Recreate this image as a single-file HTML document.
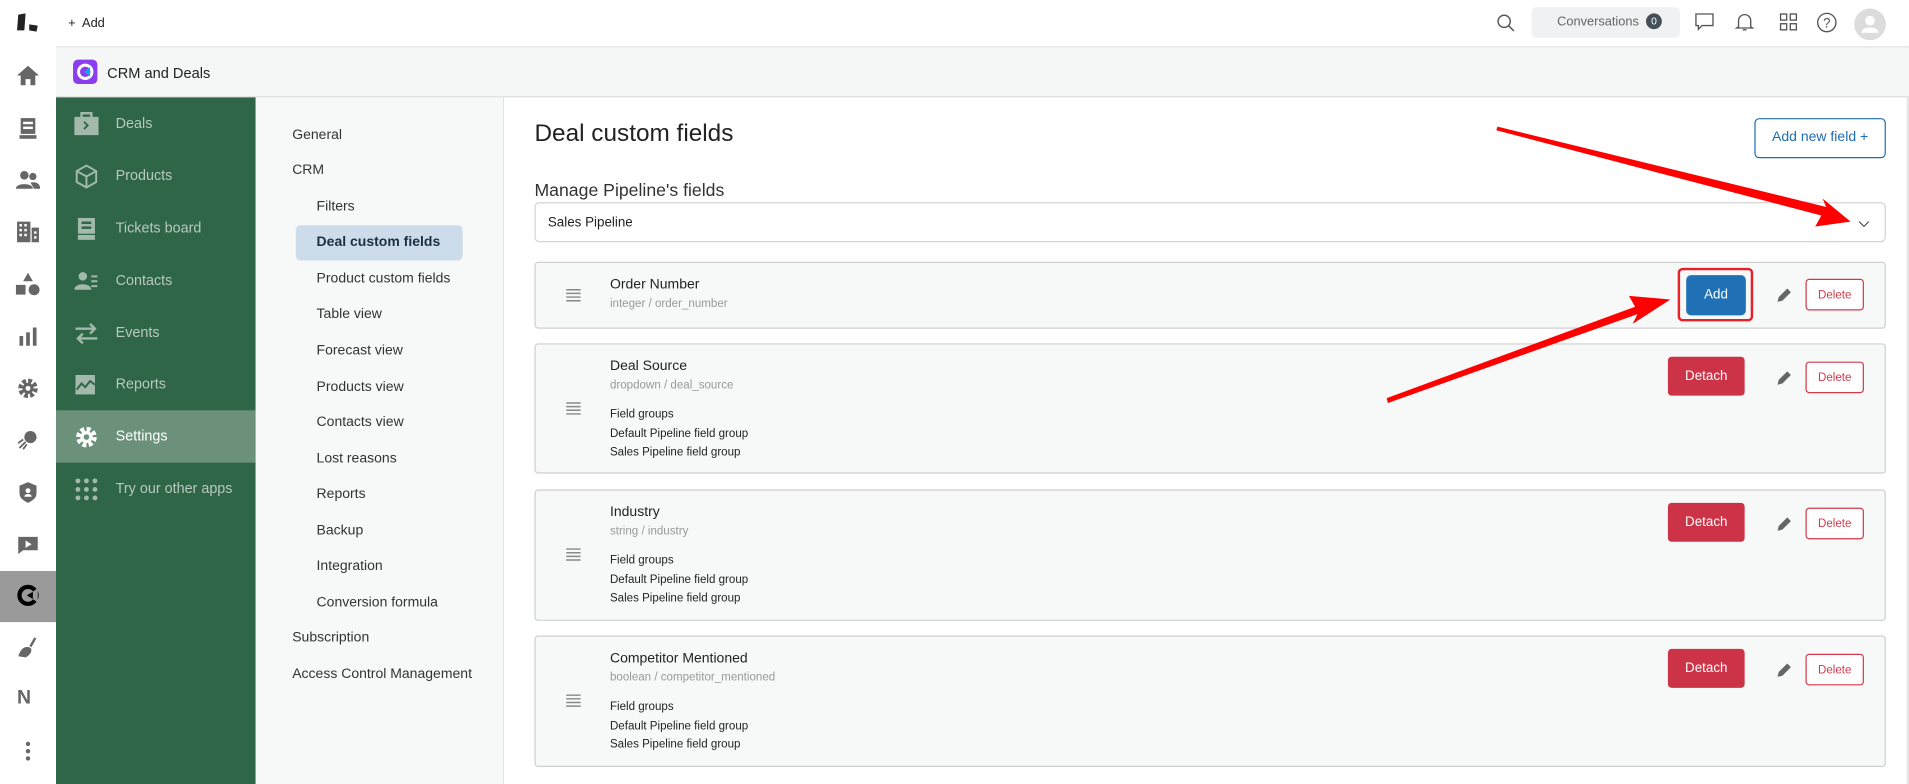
<!DOCTYPE html>
<html><head><meta charset="utf-8"><style>
*{box-sizing:border-box;margin:0;padding:0}
body{width:1909px;height:784px;overflow:hidden;background:#fff;font-family:"Liberation Sans",sans-serif}
#w{position:absolute;left:0;top:0;width:1568px;height:644px;transform:scale(1.21747);transform-origin:0 0}
.a{position:absolute}
.rail{left:0;top:0;width:46px;height:644px;background:#fff}
.ri{position:absolute;left:13px;width:20px;height:20px;color:#666}
.top{left:46px;top:0;width:1522px;height:39px;background:#fff;border-bottom:1px solid #e3e3e3}
.hdr{left:46px;top:39px;width:1522px;height:41px;background:#f5f6f6;border-bottom:1px solid #ddd}
.side{left:46px;top:80px;width:164px;height:564px;background:#2e6647}
.si{position:absolute;left:0;width:164px;height:43px;color:#b8c8be;font-size:11.8px;line-height:43px;padding-left:49px}
.si svg{position:absolute;left:15px;top:12px}
.sub{left:210px;top:80px;width:204px;height:564px;background:#f7f8f8;border-right:1px solid #e3e3e3}
.sb{position:absolute;font-size:11.5px;color:#333}
.main{left:414px;top:80px;width:1154px;height:564px;background:#fff;border-right:2px solid #e6e6e6}
.card{position:absolute;left:439px;width:1110px;background:#f7f8f8;border:1px solid #cfcfcf;border-radius:3px}
.nm{position:absolute;left:61px;font-size:11.5px;color:#222}
.ty{position:absolute;left:61px;font-size:9.5px;color:#999}
.fg{position:absolute;left:61px;font-size:9.5px;color:#222;line-height:15.5px}
.hb{position:absolute;left:25px}
.det{position:absolute;left:930px;width:63px;height:32px;background:#cd3346;color:#fff;border-radius:3px;font-size:11px;text-align:center;line-height:32px}
.del{position:absolute;left:1043px;width:48px;height:26px;border:1px solid #d23a4b;color:#d23a4b;border-radius:3px;font-size:9.5px;text-align:center;line-height:26px;background:#fff}
.pen{position:absolute;left:1019px}
</style></head><body><div id="w">
<div class="a rail">
 <svg class="ri" style="top:9px" viewBox="0 0 20 20"><path d="M2 3l6-1 -1 14-6 0z" fill="#222"/><path d="M11 11l7 1-1 5-6-1z" fill="#222"/></svg>
 <svg class="ri" style="top:52px" viewBox="0 0 20 20"><path d="M10 2L1 10h3v8h4v-5h4v5h4v-8h3z" fill="#666"/></svg>
 <svg class="ri" style="top:95px" viewBox="0 0 20 20"><rect x="4" y="2" width="12" height="13" fill="#666"/><rect x="3" y="16" width="14" height="3" fill="#666"/><rect x="6" y="5" width="8" height="2" fill="#fff"/><rect x="6" y="9" width="8" height="2" fill="#fff"/></svg>
 <svg class="ri" style="top:138px" viewBox="0 0 20 20"><circle cx="7" cy="6" r="3.5" fill="#666"/><circle cx="14" cy="7" r="3" fill="#666"/><path d="M0 17c0-5 14-5 14 0z M12 12c5-1 8 1 8 5h-5z" fill="#666"/></svg>
 <svg class="ri" style="top:180px" viewBox="0 0 20 20"><path d="M1 2h11v17H1z M13 7h6v12h-6z" fill="#666"/><path d="M3 4h2v2H3zM7 4h2v2H7zM3 8h2v2H3zM7 8h2v2H7zM3 12h2v2H3zM7 12h2v2H7zM15 10h2v2h-2zM15 14h2v2h-2z" fill="#fff"/></svg>
 <svg class="ri" style="top:223px" viewBox="0 0 20 20"><path d="M10 1l4 7H6z" fill="#666"/><rect x="0" y="11" width="8" height="8" fill="#666"/><circle cx="15" cy="15" r="4.5" fill="#666"/></svg>
 <svg class="ri" style="top:266px" viewBox="0 0 20 20"><rect x="3" y="10" width="3" height="8" fill="#666"/><rect x="8.5" y="7" width="3" height="11" fill="#666"/><rect x="14" y="3" width="3" height="15" fill="#666"/></svg>
 <svg class="ri" style="top:309px" viewBox="0 0 20 20"><circle cx="10" cy="10" r="6" fill="none" stroke="#666" stroke-width="4" stroke-dasharray="3 1.7"/><circle cx="10" cy="10" r="4.5" fill="#666"/><circle cx="10" cy="10" r="2" fill="#fff"/></svg>
 <svg class="ri" style="top:351px" viewBox="0 0 20 20"><circle cx="12" cy="8" r="5" fill="#666"/><path d="M3 17l5-5M2 13l4-3M6 18l3-4" stroke="#666" stroke-width="1.5"/></svg>
 <svg class="ri" style="top:394px" viewBox="0 0 20 20"><path d="M10 2l7 3v6c0 4-3 6-7 8-4-2-7-4-7-8V5z" fill="#666"/><circle cx="10" cy="9" r="2" fill="#fff"/><path d="M7 14c0-3 6-3 6 0z" fill="#fff"/></svg>
 <svg class="ri" style="top:437px" viewBox="0 0 20 20"><path d="M2 4h16v11H6l-4 3z" fill="#666"/><path d="M8 7l5 3-5 3z" fill="#fff"/></svg>
 <div class="a" style="left:0;top:469px;width:46px;height:42px;background:#9a9a9a"></div>
 <svg class="ri" style="top:479px" viewBox="0 0 20 20"><circle cx="10" cy="10" r="7" fill="none" stroke="#000" stroke-width="3.5"/><path d="M10 10l8-6v12z" fill="#9a9a9a"/><path d="M9 10l5-3v6z" fill="#000"/></svg>
 <svg class="ri" style="top:522px" viewBox="0 0 20 20"><path d="M16 2l-4 7" stroke="#666" stroke-width="2"/><path d="M2 17c2-6 5-9 10-7 2 2 0 6-4 8z" fill="#666"/></svg>
 <div class="a" style="left:14px;top:565px;font-weight:bold;font-size:16px;color:#666">N</div>
 <svg class="ri" style="top:607px" viewBox="0 0 20 20"><circle cx="10" cy="4" r="1.8" fill="#666"/><circle cx="10" cy="10" r="1.8" fill="#666"/><circle cx="10" cy="16" r="1.8" fill="#666"/></svg>
</div>
<div class="a top">
 <div class="a" style="left:10px;top:13px;font-size:10.5px;color:#222">+&nbsp; Add</div>
 <svg class="a" style="left:1183px;top:11px" width="16" height="16" viewBox="0 0 16 16"><circle cx="6.5" cy="6.5" r="5" fill="none" stroke="#555" stroke-width="1.2"/><path d="M10 10l4.5 4.5" stroke="#555" stroke-width="1.2"/></svg>
 <div class="a" style="left:1212px;top:6px;width:122px;height:25px;background:#f0f1f2;border-radius:4px;font-size:10.5px;color:#666;line-height:25px;padding-left:21px">Conversations <span style="display:inline-block;width:13px;height:13px;border-radius:50%;background:#454f58;color:#fff;font-size:8.5px;text-align:center;line-height:13px;margin-left:3px;vertical-align:1px">0</span></div>
 <svg class="a" style="left:1346px;top:10px" width="16" height="16" viewBox="0 0 16 16"><path d="M1 1.5h14v9.5H6l-3 3v-3H1z" fill="none" stroke="#555" stroke-width="1.1"/></svg>
 <svg class="a" style="left:1379px;top:10px" width="16" height="16" viewBox="0 0 16 16"><path d="M3 12V7a5 5 0 0110 0v5l1.5 1h-13z M6.5 14.5h3" fill="none" stroke="#555" stroke-width="1.1"/></svg>
 <svg class="a" style="left:1415px;top:10px" width="16" height="16" viewBox="0 0 16 16"><g fill="none" stroke="#555" stroke-width="1.1"><rect x="1.5" y="1.5" width="5" height="5"/><rect x="9.5" y="1.5" width="5" height="5"/><rect x="1.5" y="9.5" width="5" height="5"/><rect x="9.5" y="9.5" width="5" height="5"/></g></svg>
 <svg class="a" style="left:1446px;top:10px" width="17" height="17" viewBox="0 0 17 17"><circle cx="8.5" cy="8.5" r="7.5" fill="none" stroke="#555" stroke-width="1.1"/><text x="8.5" y="12.5" text-anchor="middle" font-size="11" fill="#555" font-family="Liberation Sans">?</text></svg>
 <div class="a" style="left:1477px;top:7px;width:26px;height:26px;border-radius:50%;background:#dcdcdc"><svg width="26" height="26" viewBox="0 0 26 26"><circle cx="13" cy="10" r="4" fill="#fff"/><path d="M6 20c0-6 14-6 14 0z" fill="#fff"/></svg></div>
</div>
<div class="a hdr">
 <div class="a" style="left:14px;top:10px;width:20px;height:20px;border-radius:4px;background:#8b3df0"><svg width="20" height="20" viewBox="0 0 20 20"><circle cx="10" cy="10" r="5.5" fill="none" stroke="#fff" stroke-width="2.5"/><path d="M9 10l5-4v8z" fill="#1aa0e8"/></svg></div>
 <div class="a" style="left:42px;top:14px;font-size:12px;color:#222">CRM and Deals</div>
</div>
<div class="a side">
 <div class="si" style="top:0"><svg width="20" height="20" viewBox="0 0 20 20"><rect x="0" y="4" width="20" height="15" fill="#a2b9ab"/><rect x="6" y="1" width="8" height="4" fill="none" stroke="#a2b9ab" stroke-width="2"/><path d="M8 8l3 3-3 3" stroke="#2e6647" stroke-width="1.5" fill="none"/></svg>Deals</div>
 <div class="si" style="top:43px"><svg width="20" height="20" viewBox="0 0 20 20"><path d="M10 1l8 4.5v9L10 19l-8-4.5v-9z M2 5.5l8 4.5 8-4.5 M10 10v9" fill="none" stroke="#a2b9ab" stroke-width="1.6"/></svg>Products</div>
 <div class="si" style="top:86px"><svg width="20" height="20" viewBox="0 0 20 20"><rect x="3" y="1" width="14" height="13" fill="#a2b9ab"/><rect x="3" y="15" width="14" height="4" fill="#a2b9ab"/><rect x="6" y="4" width="8" height="2" fill="#2e6647"/><rect x="6" y="8" width="8" height="2" fill="#2e6647"/></svg>Tickets board</div>
 <div class="si" style="top:129px"><svg width="20" height="20" viewBox="0 0 20 20"><circle cx="7" cy="6" r="3.5" fill="#a2b9ab"/><path d="M0 17c0-6 14-6 14 0z" fill="#a2b9ab"/><path d="M14 6h5M14 10h5M14 14h5" stroke="#a2b9ab" stroke-width="1.6"/></svg>Contacts</div>
 <div class="si" style="top:172px"><svg width="20" height="20" viewBox="0 0 20 20"><path d="M1 6h16M13 2l4 4-4 4M19 14H3M7 10l-4 4 4 4" stroke="#a2b9ab" stroke-width="2" fill="none"/></svg>Events</div>
 <div class="si" style="top:214px"><svg width="20" height="20" viewBox="0 0 20 20"><rect x="1" y="2" width="16" height="16" fill="#a2b9ab"/><path d="M2 14l4-5 3 3 4-5 4 3" stroke="#2e6647" stroke-width="1.6" fill="none"/></svg>Reports</div>
 <div class="a" style="left:0;top:257px;width:164px;height:43px;background:#6b917b"></div>
 <div class="si" style="top:257px;color:#fff"><svg width="20" height="20" viewBox="0 0 20 20"><circle cx="10" cy="10" r="6.5" fill="none" stroke="#fff" stroke-width="4" stroke-dasharray="3.2 1.9"/><circle cx="10" cy="10" r="5" fill="#fff"/><circle cx="10" cy="10" r="2.3" fill="#6b917b"/></svg>Settings</div>
 <div class="si" style="top:300px"><svg width="20" height="20" viewBox="0 0 20 20"><g fill="#a2b9ab"><circle cx="3" cy="3" r="2"/><circle cx="10" cy="3" r="2"/><circle cx="17" cy="3" r="2"/><circle cx="3" cy="10" r="2"/><circle cx="10" cy="10" r="2"/><circle cx="17" cy="10" r="2"/><circle cx="3" cy="17" r="2"/><circle cx="10" cy="17" r="2"/><circle cx="17" cy="17" r="2"/></g></svg>Try our other apps</div>
</div>
<div class="a sub">
 <div class="sb" style="left:30px;top:25px">General</div>
 <div class="sb" style="left:30px;top:54px">CRM</div>
 <div class="sb" style="left:50px;top:84px">Filters</div>
 <div class="a" style="left:33px;top:105px;width:137px;height:29px;background:#cddcea;border-radius:4px"></div>
 <div class="sb" style="left:50px;top:113px;font-weight:bold;color:#1d2f45">Deal custom fields</div>
 <div class="sb" style="left:50px;top:143px">Product custom fields</div>
 <div class="sb" style="left:50px;top:172px">Table view</div>
 <div class="sb" style="left:50px;top:202px">Forecast view</div>
 <div class="sb" style="left:50px;top:232px">Products view</div>
 <div class="sb" style="left:50px;top:261px">Contacts view</div>
 <div class="sb" style="left:50px;top:291px">Lost reasons</div>
 <div class="sb" style="left:50px;top:320px">Reports</div>
 <div class="sb" style="left:50px;top:350px">Backup</div>
 <div class="sb" style="left:50px;top:379px">Integration</div>
 <div class="sb" style="left:50px;top:409px">Conversion formula</div>
 <div class="sb" style="left:30px;top:438px">Subscription</div>
 <div class="sb" style="left:30px;top:468px">Access Control Management</div>
</div>
<div class="a main"></div>
<div class="a" style="left:439px;top:99px;font-size:20px;color:#222">Deal custom fields</div>
<div class="a" style="left:1441px;top:97px;width:108px;height:33px;border:1px solid #1f6db3;border-radius:4px;color:#1f6db3;font-size:11.5px;text-align:center;line-height:31px">Add new field +</div>
<div class="a" style="left:439px;top:149px;font-size:14.5px;color:#333">Manage Pipeline's fields</div>
<div class="a" style="left:439px;top:166px;width:1110px;height:33px;border:1px solid #d5d5d5;border-radius:4px;font-size:11px;color:#222;line-height:33px;padding-left:10px">Sales Pipeline
 <svg class="a" style="left:1086px;top:14px" width="10" height="6" viewBox="0 0 10 6"><path d="M1 1l4 4 4-4" fill="none" stroke="#555" stroke-width="1"/></svg></div>

<div class="card" style="top:215px;height:55px">
 <svg class="hb" style="top:21px" width="12" height="11" viewBox="0 0 12 11"><path d="M0 1h12M0 4h12M0 7h12M0 10h12" stroke="#888" stroke-width="1.2"/></svg>
 <div class="nm" style="top:12px">Order Number</div><div class="ty" style="top:28px">integer / order_number</div>
 <div class="a" style="left:938px;top:4px;width:62px;height:44px;border:2px solid #e8202a;border-radius:4px"></div>
 <div class="a" style="left:945px;top:10px;width:49px;height:33px;background:#1f70b5;border-radius:4px;color:#fff;font-size:11px;text-align:center;line-height:33px">Add</div>
 <svg class="pen" style="top:19px" width="14" height="14" viewBox="0 0 14 14"><path d="M1 13l1-4 7-7 3 3-7 7z M10 1l3 3" fill="#666"/></svg>
 <div class="del" style="top:13px">Delete</div>
</div>
<div class="card" style="top:282px;height:107px">
 <svg class="hb" style="top:47px" width="12" height="11" viewBox="0 0 12 11"><path d="M0 1h12M0 4h12M0 7h12M0 10h12" stroke="#888" stroke-width="1.2"/></svg>
 <div class="nm" style="top:12px">Deal Source</div><div class="ty" style="top:28px">dropdown / deal_source</div>
 <div class="fg" style="top:50px">Field groups<br>Default Pipeline field group<br>Sales Pipeline field group</div>
 <div class="det" style="top:10px">Detach</div>
 <svg class="pen" style="top:20px" width="14" height="14" viewBox="0 0 14 14"><path d="M1 13l1-4 7-7 3 3-7 7z M10 1l3 3" fill="#666"/></svg>
 <div class="del" style="top:14px">Delete</div>
</div>
<div class="card" style="top:402px;height:108px">
 <svg class="hb" style="top:47px" width="12" height="11" viewBox="0 0 12 11"><path d="M0 1h12M0 4h12M0 7h12M0 10h12" stroke="#888" stroke-width="1.2"/></svg>
 <div class="nm" style="top:12px">Industry</div><div class="ty" style="top:28px">string / industry</div>
 <div class="fg" style="top:50px">Field groups<br>Default Pipeline field group<br>Sales Pipeline field group</div>
 <div class="det" style="top:10px">Detach</div>
 <svg class="pen" style="top:20px" width="14" height="14" viewBox="0 0 14 14"><path d="M1 13l1-4 7-7 3 3-7 7z M10 1l3 3" fill="#666"/></svg>
 <div class="del" style="top:14px">Delete</div>
</div>
<div class="card" style="top:522px;height:108px">
 <svg class="hb" style="top:47px" width="12" height="11" viewBox="0 0 12 11"><path d="M0 1h12M0 4h12M0 7h12M0 10h12" stroke="#888" stroke-width="1.2"/></svg>
 <div class="nm" style="top:12px">Competitor Mentioned</div><div class="ty" style="top:28px">boolean / competitor_mentioned</div>
 <div class="fg" style="top:50px">Field groups<br>Default Pipeline field group<br>Sales Pipeline field group</div>
 <div class="det" style="top:10px">Detach</div>
 <svg class="pen" style="top:20px" width="14" height="14" viewBox="0 0 14 14"><path d="M1 13l1-4 7-7 3 3-7 7z M10 1l3 3" fill="#666"/></svg>
 <div class="del" style="top:14px">Delete</div>
</div>
<svg class="a" style="left:0;top:0" width="1568" height="644">
 <polygon points="1230,104 1500,170 1497,163 1520,182 1491,186 1496,177 1229,107" fill="#f00"/>
 <polygon points="1140,331 1345,258 1341,266 1372,246 1338,243 1343,252 1139,327" fill="#f00"/>
</svg>
</div></body></html>
